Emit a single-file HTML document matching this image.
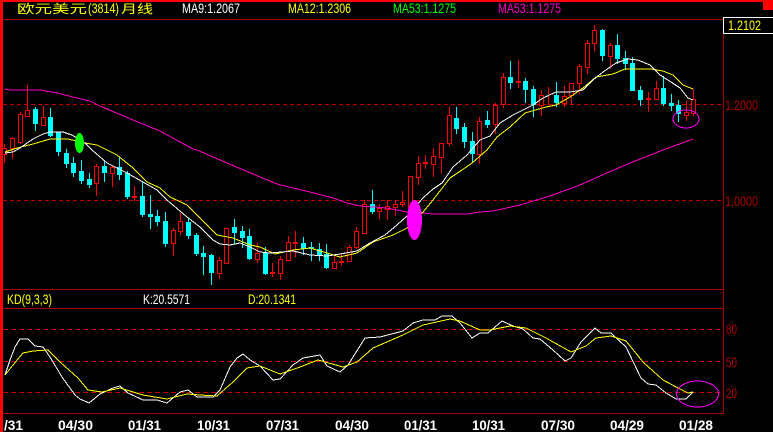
<!DOCTYPE html>
<html><head><meta charset="utf-8"><style>
html,body{margin:0;padding:0;background:#000;width:773px;height:432px;overflow:hidden}
svg{display:block}
text{font-family:"Liberation Sans","WenQuanYi Zen Hei","Noto Sans CJK SC",sans-serif;font-size:14px}
.d{font-weight:bold;fill:#fff;font-size:14px}
.a{fill:#b00000;font-size:14px}
</style></head><body>
<svg width="773" height="432" viewBox="0 0 773 432" xmlns="http://www.w3.org/2000/svg">
<rect width="773" height="432" fill="#000"/>
<g shape-rendering="crispEdges">
<path d="M3 19.5H724M3 289.5H724M3 308.5H724M3 413.5H724M723.5 19V414" stroke="#a80000" fill="none"/>
<path d="M3 104.5H723M3 200.5H723" stroke="#c00000" stroke-dasharray="4 3" fill="none"/>
<path d="M3 329.5H723M3 361.5H723M3 392.5H723" stroke="#c00000" stroke-dasharray="5 3" fill="none"/>
<!-- red wicks -->
<path stroke="#f00" fill="none" d="M4.5 144V163M12.5 137V159M20.5 112V144M27.5 85V116M43.5 106V126M96.5 164V196M112.5 166V187M134.5 186V201M173.5 228V256M180.5 213V235M219.5 257V279M226.5 228V263M257.5 243V263M272.5 263V277M280.5 256V280M288.5 236V261M295.5 231V257M334.5 256V269M341.5 254V266M349.5 245V262M356.5 227V249M364.5 200V234M379.5 204V219M387.5 200V220M395.5 200V216M402.5 191V207M410.5 176V207M418.5 156V185M425.5 155V169M433.5 148V177M441.5 143V174M449.5 107V146M479.5 117V164M495.5 103V134M503.5 73V108M518.5 60V88M541.5 90V116M548.5 87V105M564.5 86V107M571.5 83V105M579.5 64V94M587.5 40V74M594.5 25V51M610.5 43V69M648.5 92V112M656.5 81V100M686.5 101V121M693.5 89V116"/>
<!-- red hollow bodies -->
<path stroke="#f00" fill="#000" d="M2.5 148.5h4V154.5h-4zM10.5 138.5h4V148.5h-4zM18.5 114.5h4V142.5h-4zM25.5 110.5h4V116.5h-4zM41.5 117.5h4V125.5h-4zM94.5 166.5h4V183.5h-4zM110.5 167.5h4V173.5h-4zM171.5 230.5h4V243.5h-4zM178.5 221.5h4V231.5h-4zM217.5 260.5h4V273.5h-4zM224.5 228.5h4V263.5h-4zM255.5 253.5h4V259.5h-4zM278.5 259.5h4V273.5h-4zM286.5 242.5h4V260.5h-4zM332.5 262.5h4V268.5h-4zM347.5 247.5h4V261.5h-4zM354.5 231.5h4V247.5h-4zM362.5 204.5h4V233.5h-4zM377.5 208.5h4V211.5h-4zM385.5 206.5h4V209.5h-4zM393.5 204.5h4V207.5h-4zM400.5 202.5h4V204.5h-4zM408.5 176.5h4V207.5h-4zM416.5 163.5h4V177.5h-4zM431.5 156.5h4V164.5h-4zM439.5 143.5h4V157.5h-4zM447.5 115.5h4V143.5h-4zM477.5 121.5h4V154.5h-4zM493.5 105.5h4V124.5h-4zM501.5 77.5h4V104.5h-4zM539.5 95.5h4V105.5h-4zM562.5 96.5h4V103.5h-4zM569.5 83.5h4V95.5h-4zM577.5 66.5h4V83.5h-4zM585.5 43.5h4V67.5h-4zM592.5 30.5h4V43.5h-4zM608.5 45.5h4V56.5h-4zM654.5 88.5h4V99.5h-4zM684.5 112.5h4V115.5h-4zM691.5 99.5h4V113.5h-4z"/>
<!-- red flat bodies -->
<path fill="#f00" d="M132 196h5v2h-5zM270 272h5v2h-5zM293 242h5v2h-5zM339 261h5v2h-5zM423 162h5v2h-5zM516 81h5v2h-5zM646 98h5v2h-5z"/>
<!-- cyan wicks -->
<path stroke="#0ff" fill="none" d="M35.5 107V131M50.5 108V137M58.5 132V156M66.5 149V168M73.5 157V177M81.5 160V184M89.5 173V188M104.5 160V182M119.5 157V180M127.5 171V199M142.5 181V217M150.5 195V229M157.5 210V226M165.5 212V247M188.5 218V239M196.5 233V256M203.5 246V275M211.5 254V285M234.5 219V244M242.5 226V248M249.5 229V260M265.5 247V275M303.5 237V255M311.5 242V261M319.5 243V261M326.5 244V269M372.5 190V214M456.5 107V134M464.5 123V148M472.5 132V163M487.5 111V128M510.5 61V89M525.5 78V103M533.5 86V117M556.5 82V107M602.5 29V61M617.5 34V64M625.5 51V70M632.5 57V91M640.5 86V106M663.5 76V106M671.5 94V111M678.5 100V122"/>
<!-- cyan bodies -->
<path fill="#0ff" d="M33 109h5V124h-5zM48 117h5V136h-5zM56 132h5V152h-5zM64 153h5V164h-5zM71 163h5V173h-5zM79 171h5V181h-5zM87 179h5V185h-5zM102 166h5V173h-5zM117 167h5V175h-5zM125 173h5V197h-5zM140 196h5V215h-5zM148 214h5V217h-5zM155 216h5V222h-5zM163 221h5V244h-5zM186 222h5V236h-5zM194 235h5V254h-5zM201 253h5V257h-5zM209 255h5V273h-5zM232 227h5V233h-5zM240 231h5V238h-5zM247 236h5V259h-5zM263 253h5V274h-5zM301 243h5V249h-5zM309 247h5V249h-5zM317 249h5V255h-5zM324 254h5V268h-5zM370 204h5V212h-5zM454 118h5V129h-5zM462 127h5V142h-5zM470 141h5V154h-5zM485 120h5V125h-5zM508 77h5V83h-5zM523 81h5V90h-5zM531 89h5V105h-5zM554 95h5V103h-5zM600 30h5V56h-5zM615 45h5V59h-5zM623 58h5V64h-5zM630 63h5V91h-5zM638 90h5V100h-5zM661 88h5V104h-5zM669 103h5V106h-5zM676 105h5V114h-5z"/>
<!-- MA53 magenta -->
<polyline fill="none" stroke="#ff00c8" points="5,89 10,90 40,90 57,93 77,98 90,101 100,106 133,120 160,131 193,149 197,150 227,163 260,177 277,184 293,188 310,192 333,198 347,203 360,206 387,208 407,212 423,213 433,214 467,214 480,212 493,211 520,205 550,196 580,185 600,176 630,163 663,150 693,139"/>
<!-- MA12 yellow -->
<polyline fill="none" stroke="#ff0" points="5,152 17,148 33,144 50,139 68,139 85,143 97,145 107,150 117,155 133,168 147,182 160,188 170,197 187,205 200,218 217,235 233,238 250,245 260,247 275,254 293,250 310,248 327,253 340,257 357,253 373,242 393,235 407,228 423,212 433,200 450,178 462,170 472,163 487,150 497,137 510,127 525,113 546,107 556,105 570,97 583,88 596,77 613,74 625,69 651,69 663,71 673,75 683,85 693,89"/>
<!-- MA9 white -->
<polyline fill="none" stroke="#fff" points="5,153 13,152 20,148 33,139 43,134 50,132 63,132 72,135 85,143 92,150 107,163 127,173 157,190 167,200 187,217 200,227 213,240 220,244 230,245 240,243 250,247 260,252 270,253 293,251 310,255 327,256 340,254 357,251 370,243 385,235 397,225 407,216 423,198 433,189 442,183 453,167 467,155 480,140 490,136 500,123 513,115 523,110 533,105 543,98 556,92 570,92 583,90 593,80 603,72 616,63 628,59 638,60 650,65 660,75 671,82 680,88 688,98 693,100"/>
<!-- markers -->
<ellipse cx="79.5" cy="143" rx="4.5" ry="10" fill="#0f0"/>
<ellipse cx="414.5" cy="220" rx="7.5" ry="20" fill="#f0f"/>
<ellipse cx="686" cy="119" rx="13" ry="9" fill="none" stroke="#f0f"/>
<!-- KD -->
<polyline fill="none" stroke="#fff" points="5,375 10,360 15,347 20,339 28,339 35,346 43,347 50,357 62,377 75,395 80,399 89,403 100,394 113,388 120,386 128,393 143,400 157,400 167,403 180,392 188,390 197,397 213,397 220,390 230,367 237,358 243,354 250,360 260,366 273,380 280,379 293,365 303,358 320,355 327,366 340,372 348,365 365,338 380,337 403,331 413,323 423,320 435,320 442,316 452,316 460,323 472,338 480,333 488,333 502,321 513,326 523,329 533,338 540,339 553,350 565,361 571,358 581,342 595,328 601,333 611,333 626,347 641,378 648,384 656,385 666,393 676,399 686,399 693,392"/>
<polyline fill="none" stroke="#ff0" points="5,375 13,365 23,353 33,351 48,350 60,362 78,378 88,390 102,392 120,388 143,395 167,399 187,394 200,395 217,396 233,382 247,368 260,366 280,374 300,367 318,360 343,367 357,362 373,348 403,335 423,325 450,319 460,321 480,330 490,330 510,326 526,328 546,338 571,352 586,346 596,338 611,336 626,341 643,362 663,380 680,389 688,393 693,392"/>
<ellipse cx="697.5" cy="394" rx="21" ry="13" fill="none" stroke="#f0f"/>
<!-- frame -->
<rect x="0" y="0" width="3" height="432" fill="#f00"/>
<rect x="0" y="0" width="773" height="2" fill="#f00"/>
<rect x="763" y="0" width="10" height="10" fill="#f00"/>
<path d="M723.5 17.5H773M723.5 33.5H773M723.5 17V34" stroke="#fff" fill="none"/>
</g>
<!-- header -->
<text x="17" y="13" fill="#ff0" style="font-size:12px" textLength="70" lengthAdjust="spacingAndGlyphs">欧元美元</text>
<text x="88" y="13" fill="#ff0" textLength="31" lengthAdjust="spacingAndGlyphs">(3814)</text>
<text x="121" y="13" fill="#ff0" style="font-size:12px" textLength="32" lengthAdjust="spacingAndGlyphs">月线</text>
<text x="182" y="13" fill="#fff" textLength="58" lengthAdjust="spacingAndGlyphs">MA9:1.2067</text>
<text x="288" y="13" fill="#ff0" textLength="63" lengthAdjust="spacingAndGlyphs">MA12:1.2306</text>
<text x="393" y="13" fill="#0f0" textLength="63" lengthAdjust="spacingAndGlyphs">MA53:1.1275</text>
<text x="498" y="13" fill="#ff00c8" textLength="63" lengthAdjust="spacingAndGlyphs">MA53:1.1275</text>
<text x="728" y="30" fill="#ff0" textLength="33" lengthAdjust="spacingAndGlyphs">1.2102</text>
<text x="725" y="110" class="a" textLength="33" lengthAdjust="spacingAndGlyphs">1.2000</text>
<text x="725" y="206" class="a" textLength="33" lengthAdjust="spacingAndGlyphs">1.0000</text>
<text x="7" y="304" fill="#ff0" textLength="45" lengthAdjust="spacingAndGlyphs">KD(9,3,3)</text>
<text x="143" y="304" fill="#fff" textLength="47" lengthAdjust="spacingAndGlyphs">K:20.5571</text>
<text x="248" y="304" fill="#ff0" textLength="48" lengthAdjust="spacingAndGlyphs">D:20.1341</text>
<text x="726" y="334" class="a" textLength="11" lengthAdjust="spacingAndGlyphs">80</text>
<text x="726" y="367" class="a" textLength="11" lengthAdjust="spacingAndGlyphs">50</text>
<text x="726" y="398" class="a" textLength="11" lengthAdjust="spacingAndGlyphs">20</text>
<text x="4" y="430" class="d" textLength="19" lengthAdjust="spacingAndGlyphs">/31</text>
<text x="58" y="430" class="d" textLength="35" lengthAdjust="spacingAndGlyphs">04/30</text>
<text x="128" y="430" class="d" textLength="33" lengthAdjust="spacingAndGlyphs">01/31</text>
<text x="197" y="430" class="d" textLength="33" lengthAdjust="spacingAndGlyphs">10/31</text>
<text x="266" y="430" class="d" textLength="33" lengthAdjust="spacingAndGlyphs">07/31</text>
<text x="335" y="430" class="d" textLength="34" lengthAdjust="spacingAndGlyphs">04/30</text>
<text x="404" y="430" class="d" textLength="33" lengthAdjust="spacingAndGlyphs">01/31</text>
<text x="472" y="430" class="d" textLength="33" lengthAdjust="spacingAndGlyphs">10/31</text>
<text x="541" y="430" class="d" textLength="34" lengthAdjust="spacingAndGlyphs">07/30</text>
<text x="610" y="430" class="d" textLength="34" lengthAdjust="spacingAndGlyphs">04/29</text>
<text x="679" y="430" class="d" textLength="34" lengthAdjust="spacingAndGlyphs">01/28</text>
</svg>
</body></html>
